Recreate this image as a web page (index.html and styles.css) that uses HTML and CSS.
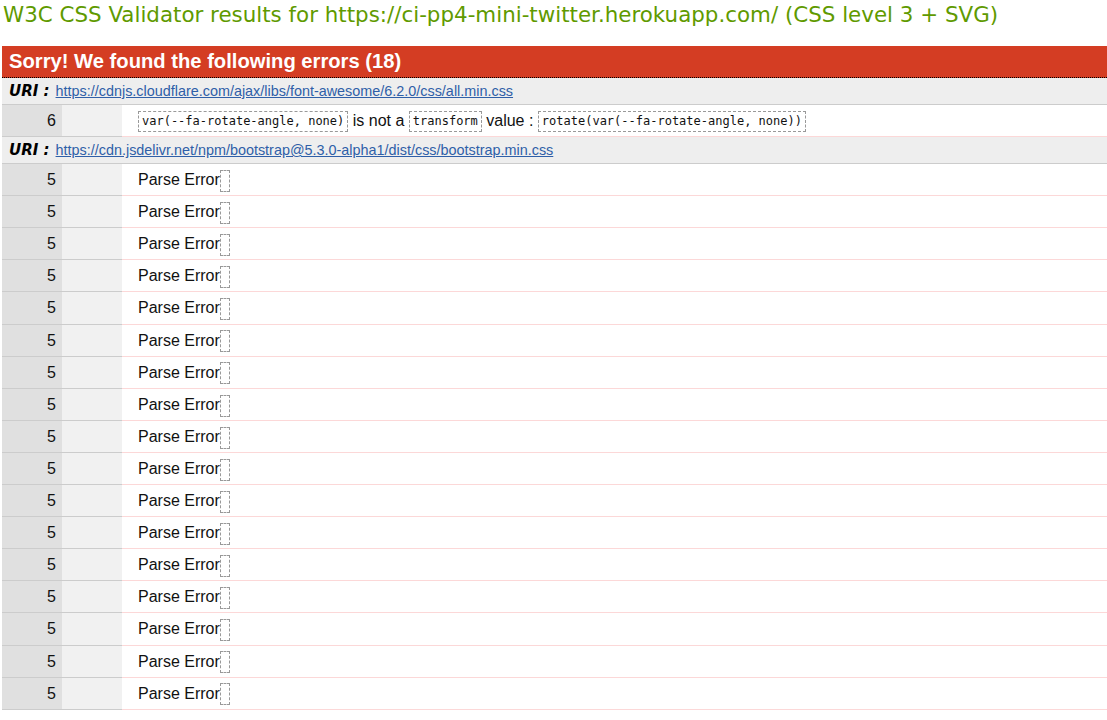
FILE: index.html
```html
<!DOCTYPE html>
<html lang="en">
<head>
<meta charset="utf-8">
<title>W3C CSS Validator results</title>
<link rel="stylesheet" href="styles.css">
</head>
<body>
<h2 class="title">W3C CSS Validator results for https://ci-pp4-mini-twitter.herokuapp.com/ (CSS level 3 + SVG)</h2>
<div class="errors">
  <h3 class="errors-head">Sorry! We found the following errors (18)</h3>
  <div class="uri-row"><span class="uri-label">URI :</span> <a class="uri-link" href="#">https://cdnjs.cloudflare.com/ajax/libs/font-awesome/6.2.0/css/all.min.css</a></div>
  <div class="err-row"><div class="ln">6</div><div class="ctx"></div><div class="msg"><span class="code">var(--fa-rotate-angle, none)</span> is not a <span class="code">transform</span> value : <span class="code">rotate(var(--fa-rotate-angle, none))</span></div></div>
  <div class="uri-row"><span class="uri-label">URI :</span> <a class="uri-link" href="#">https://cdn.jsdelivr.net/npm/bootstrap@5.3.0-alpha1/dist/css/bootstrap.min.css</a></div>
  <div class="err-row"><div class="ln">5</div><div class="ctx"></div><div class="msg">Parse Error<span class="empty"></span></div></div>
  <div class="err-row"><div class="ln">5</div><div class="ctx"></div><div class="msg">Parse Error<span class="empty"></span></div></div>
  <div class="err-row"><div class="ln">5</div><div class="ctx"></div><div class="msg">Parse Error<span class="empty"></span></div></div>
  <div class="err-row"><div class="ln">5</div><div class="ctx"></div><div class="msg">Parse Error<span class="empty"></span></div></div>
  <div class="err-row"><div class="ln">5</div><div class="ctx"></div><div class="msg">Parse Error<span class="empty"></span></div></div>
  <div class="err-row"><div class="ln">5</div><div class="ctx"></div><div class="msg">Parse Error<span class="empty"></span></div></div>
  <div class="err-row"><div class="ln">5</div><div class="ctx"></div><div class="msg">Parse Error<span class="empty"></span></div></div>
  <div class="err-row"><div class="ln">5</div><div class="ctx"></div><div class="msg">Parse Error<span class="empty"></span></div></div>
  <div class="err-row"><div class="ln">5</div><div class="ctx"></div><div class="msg">Parse Error<span class="empty"></span></div></div>
  <div class="err-row"><div class="ln">5</div><div class="ctx"></div><div class="msg">Parse Error<span class="empty"></span></div></div>
  <div class="err-row"><div class="ln">5</div><div class="ctx"></div><div class="msg">Parse Error<span class="empty"></span></div></div>
  <div class="err-row"><div class="ln">5</div><div class="ctx"></div><div class="msg">Parse Error<span class="empty"></span></div></div>
  <div class="err-row"><div class="ln">5</div><div class="ctx"></div><div class="msg">Parse Error<span class="empty"></span></div></div>
  <div class="err-row"><div class="ln">5</div><div class="ctx"></div><div class="msg">Parse Error<span class="empty"></span></div></div>
  <div class="err-row"><div class="ln">5</div><div class="ctx"></div><div class="msg">Parse Error<span class="empty"></span></div></div>
  <div class="err-row"><div class="ln">5</div><div class="ctx"></div><div class="msg">Parse Error<span class="empty"></span></div></div>
  <div class="err-row"><div class="ln">5</div><div class="ctx"></div><div class="msg">Parse Error<span class="empty"></span></div></div>
</div>
</body>
</html>
```
FILE: styles.css
```css
html, body {
  margin: 0;
  padding: 0;
  background: #fff;
}
body {
  font-family: "Liberation Sans", Arial, sans-serif;
  color: #000;
}
.title {
  margin: 0;
  padding: 2px 0 0 3px;
  height: 46px;
  box-sizing: border-box;
  font-family: "DejaVu Sans", Verdana, sans-serif;
  font-weight: normal;
  font-size: 21.4px;
  line-height: 26px;
  color: #5f9a00;
  white-space: nowrap;
}
.errors {
  margin-left: 2px;
}
.errors-head {
  margin: 0;
  height: 32px;
  box-sizing: border-box;
  padding: 0 0 0 7px;
  background: #d43d23;
  color: #fff;
  font-family: "Liberation Sans", Arial, sans-serif;
  font-weight: bold;
  font-size: 20.2px;
  line-height: 31px;
  border-bottom: 1px dotted #000;
  white-space: nowrap;
}
.uri-row {
  height: 27px;
  box-sizing: border-box;
  background: #eee;
  border-bottom: 1px solid #ccc;
  padding-left: 7px;
  font-size: 14.4px;
  line-height: 26px;
  white-space: nowrap;
}
.uri-label {
  font-family: "DejaVu Sans", Verdana, sans-serif;
  font-weight: bold;
  font-style: italic;
  font-size: 15px;
  color: #000;
}
.uri-link {
  margin-left: 2px;
  color: #2f5fa8;
  text-decoration: underline;
}
.err-row {
  display: grid;
  grid-template-columns: 60px 60px 1fr;
  height: 32.1px;
}
.ln {
  background: #e0e0e0;
  border-bottom: 1px solid #ccc;
  text-align: right;
  padding-right: 6px;
  font-size: 16px;
  line-height: 31px;
  color: #111;
}
.ctx {
  background: #f1f1f1;
  border-bottom: 1px solid #ccc;
}
.msg {
  background: #fff;
  border-bottom: 1px solid #fcd8d8;
  padding-left: 16px;
  font-size: 16px;
  line-height: 31px;
  color: #111;
  white-space: nowrap;
}
.code {
  display: inline-block;
  border: 1px dashed #999;
  padding: 1px 3px;
  font-family: "DejaVu Sans Mono", "Liberation Mono", monospace;
  font-size: 12px;
  line-height: 17px;
  vertical-align: middle;
  color: #111;
}
.empty {
  display: inline-block;
  width: 8px;
  height: 20px;
  border: 1px dashed #999;
  vertical-align: middle;
}
```
